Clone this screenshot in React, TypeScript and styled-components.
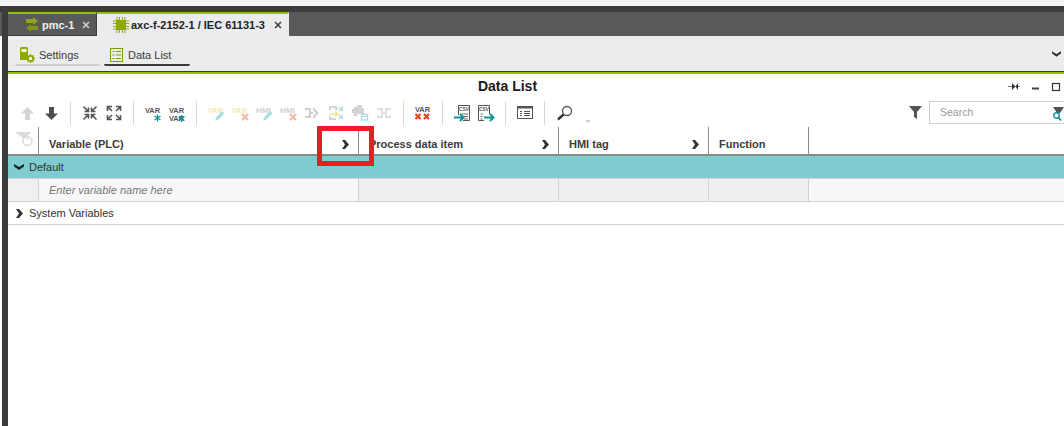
import React from "react";
import styled, { createGlobalStyle } from "styled-components";

const Global = createGlobalStyle`
  html, body { margin: 0; padding: 0; background: #fff; overflow: hidden; }
  * { box-sizing: border-box; }
  #root { font-family: "Liberation Sans", Arial, sans-serif; }
`;

const Page = styled.div`
  position: relative;
  width: 1064px;
  height: 426px;
  overflow: hidden;
  background: #fff;
  display: flex;
  flex-direction: column;
`;

const TopGap = styled.div`
  height: 6px;
  flex: none;
  background: #f5f5f5;
`;

const DarkStrip = styled.div`
  height: 6px;
  flex: none;
  background: #3c3c3c;
`;

const Frame = styled.div`
  flex: 1;
  display: flex;
  min-height: 0;
`;

const Gutter = styled.div`
  width: 2px;
  height: 24px;
  flex: none;
  background: #58595b;
`;

const Rail = styled.div`
  width: 6px;
  flex: none;
  background: #3c3c3c;
`;

const Main = styled.div`
  flex: 1;
  min-width: 0;
  display: flex;
  flex-direction: column;
  background: #fff;
`;

const TabBar = styled.div`
  height: 24px;
  flex: none;
  background: #58595b;
  display: flex;
`;

const Tab = styled.div<{ $active?: boolean; $width: number }>`
  width: ${(p) => p.$width}px;
  height: 24px;
  display: flex;
  align-items: center;
  border-top: 2px solid #8fc400;
  border-right: 1px solid ${(p) => (p.$active ? "#ebeded" : "#3c3c3c")};
  border-bottom: 1px solid ${(p) => (p.$active ? "#ebeded" : "#3c3c3c")};
  background: ${(p) => (p.$active ? "#ebeded" : "#58595b")};
  color: ${(p) => (p.$active ? "#222" : "#f0f0f0")};
  font-size: 11px;
  font-weight: bold;
  white-space: nowrap;
`;

const TabIcon = styled.svg<{ $left: number }>`
  margin-left: ${(p) => p.$left}px;
  flex: none;
`;

const TabLabel = styled.span<{ $gap: number }>`
  margin-left: ${(p) => p.$gap}px;
`;

const TabClose = styled.svg<{ $gap: number }>`
  margin-left: ${(p) => p.$gap}px;
  flex: none;
`;

const SubBar = styled.div`
  height: 36px;
  flex: none;
  background: #ebeded;
  border-bottom: 1px solid #3c3c3c;
  display: flex;
  align-items: flex-start;
  padding: 7px 0 0 7px;
  gap: 4px;
  position: relative;
`;

const SubTab = styled.div<{ $active?: boolean; $width: number; $inset: number; $gap: number }>`
  width: ${(p) => p.$width}px;
  height: 23px;
  display: flex;
  align-items: center;
  gap: ${(p) => p.$gap}px;
  padding: 3px 0 0 ${(p) => p.$inset}px;
  font-size: 11px;
  color: #3c3c3c;
  border-bottom: 2px solid ${(p) => (p.$active ? "#3c3c3c" : "#cfcfcf")};
  border-radius: 0 0 2px 2px;
`;

const ChevronDown = styled.svg`
  position: absolute;
  right: 3px;
  top: 15px;
`;

const GreenLine = styled.div`
  height: 2px;
  flex: none;
  background: #8fc400;
`;

const TitleBar = styled.div`
  height: 25px;
  flex: none;
  display: flex;
  align-items: center;
  justify-content: center;
  position: relative;
  padding: 0 57px 2px 0;
  font-size: 14px;
  font-weight: bold;
  color: #1a1a1a;
`;

const WindowControls = styled.svg`
  position: absolute;
  right: 0;
  top: 7px;
`;

const Toolbar = styled.div`
  height: 28px;
  flex: none;
  display: flex;
  align-items: center;
  padding-left: 7px;
  position: relative;
`;

const Tool = styled.svg`
  flex: none;
  display: block;
  width: 24px;
  height: 24px;
`;

const Sep = styled.div`
  width: 1px;
  height: 24px;
  background: #d8d8d8;
  margin: 0 7px;
  flex: none;
`;

const Caret = styled.svg`
  flex: none;
  margin: 17px 0 0 9px;
`;

const IconText = styled.text`
  font-family: "Liberation Sans", Arial, sans-serif;
  font-size: 8px;
  font-weight: bold;
`;

const SmallText = styled.text`
  font-family: "Liberation Sans", Arial, sans-serif;
  font-size: 6px;
  font-weight: bold;
`;

const FilterBox = styled.div`
  position: absolute;
  right: 0;
  top: 2px;
  display: flex;
  align-items: center;
  gap: 7px;
`;

const SearchBox = styled.div`
  width: 135px;
  height: 23px;
  border: 1px solid #cfcfcf;
  border-right: none;
  display: flex;
  align-items: center;
  padding: 0 0 2px 10px;
  font-size: 10.5px;
  color: #9a9a9a;
  position: relative;
`;

const SearchGlyph = styled.svg`
  position: absolute;
  right: 0;
  top: 4px;
`;

const HeaderRow = styled.div`
  height: 29px;
  flex: none;
  display: flex;
  border-bottom: 2px solid #8a8a8a;
`;

const Col = styled.div<{ $w: number }>`
  width: ${(p) => p.$w}px;
  flex: none;
  height: 27px;
  border-right: 1px solid #8a8a8a;
  display: flex;
  align-items: center;
  justify-content: space-between;
  padding: 7px 9px 0 10px;
  font-size: 11px;
  font-weight: bold;
  color: #3c3c3c;
  position: relative;
  white-space: nowrap;
`;

const FilterToggle = styled.svg`
  position: absolute;
  left: 7px;
  top: 5px;
`;

const GroupRow = styled.div`
  height: 23px;
  flex: none;
  background: #7fcdd1;
  border-bottom: 1px solid #d2d2d2;
  display: flex;
  align-items: center;
  padding-left: 6px;
  gap: 5px;
  font-size: 11px;
  color: #333;
`;

const EntryRow = styled.div`
  height: 23px;
  flex: none;
  display: flex;
  background: #f8f8f8;
  border-bottom: 1px solid #d2d2d2;
`;

const EntryCell = styled.div<{ $w: number; $tone: string }>`
  width: ${(p) => p.$w}px;
  flex: none;
  background: ${(p) => p.$tone};
  border-right: 1px solid #d2d2d2;
  display: flex;
  align-items: center;
  padding-left: 10px;
  font-size: 11px;
  font-style: italic;
  color: #777;
`;

const SystemRow = styled.div`
  height: 23px;
  flex: none;
  display: flex;
  align-items: center;
  padding-left: 6px;
  gap: 5px;
  font-size: 11px;
  color: #333;
  border-bottom: 1px solid #d2d2d2;
`;

const ChevSlot = styled.span`
  width: 10px;
  flex: none;
  display: flex;
  justify-content: center;
`;

const Highlight = styled.div`
  position: absolute;
  left: 317px;
  top: 126px;
  width: 57px;
  height: 40px;
  border: 5px solid #ed1c24;
`;

const ChevRight = () => (
  <svg width="7" height="9" viewBox="0 0 7 9">
    <path d="M0 0h3l4 4.5L3 9H0l3-4.5z" fill="#333" />
  </svg>
);

const ChevDown = () => (
  <svg width="10" height="6" viewBox="0 0 10 6">
    <path d="M0 0l5 3 5-3v2.5L5 6 0 2.5z" fill="#222" />
  </svg>
);

const Pen = ({ color }: { color: string }) => (
  <path d="M11 20l1-3.5 6-6.5 2.5 2.5-6 6z" fill={color} />
);

const Cross = ({ color }: { color: string }) => (
  <path d="M14 13l6 6M20 13l-6 6" stroke={color} strokeWidth="2.2" />
);

const Star = ({ x, y }: { x: number; y: number }) => (
  <path
    d={`M${x} ${y - 3.5}v7M${x - 3} ${y - 2}l6 4M${x + 3} ${y - 2}l-6 4`}
    stroke="#0f939b"
    strokeWidth="1.3"
  />
);

const Label = ({ y = 12, color, children }: { y?: number; color: string; children: string }) => (
  <IconText x="4" y={y} fill={color} textLength={15} lengthAdjust="spacingAndGlyphs">
    {children}
  </IconText>
);

const ChipPins =
  "M4 0v3M6.500 0v3M9.500 0v3M12 0v3M4 13v3M6.500 13v3M9.500 13v3M12 13v3M0 4h3M0 6.500h3M0 9.500h3M0 12h3M13 4h3M13 6.500h3M13 9.500h3M13 12h3";

export default function App() {
  return (
    <Page>
      <Global />
      <TopGap />
      <DarkStrip />
      <Frame>
        <Gutter />
        <Rail />
        <Main>
          <TabBar>
            <Tab $width={89}>
              <TabIcon $left={18} width="12" height="15" viewBox="0 0 12 15">
                <path d="M0 2h7V0l5 4-5 4V6H0z" fill="#8fa31a" />
                <path d="M12 9H5V7l-5 4 5 4v-2h7z" fill="#7f9318" />
              </TabIcon>
              <TabLabel $gap={4}>pmc-1</TabLabel>
              <TabClose $gap={8} width="8" height="8" viewBox="0 0 8 8">
                <path d="M1 1l6 6M7 1L1 7" stroke="#cfcfcf" strokeWidth="1.6" />
              </TabClose>
            </Tab>
            <Tab $active $width={192}>
              <TabIcon $left={16} width="16" height="16" viewBox="0 0 16 16">
                <rect x="3" y="3" width="10" height="10" fill="#8fa800" />
                <path d={ChipPins} stroke="#8fa800" />
              </TabIcon>
              <TabLabel $gap={2}>axc-f-2152-1 / IEC 61131-3</TabLabel>
              <TabClose $gap={9} width="8" height="8" viewBox="0 0 8 8">
                <path d="M1 1l6 6M7 1L1 7" stroke="#444" strokeWidth="1.6" />
              </TabClose>
            </Tab>
          </TabBar>
          <SubBar>
            <SubTab $width={85} $inset={5} $gap={4}>
              <svg width="15" height="16" viewBox="0 0 15 16">
                <path d="M1.5 0h5A1.5 1.5 0 0 1 8 1.5V13H0V1.500A1.500 1.500 0 0 1 1.500 0z" fill="#8fa800" />
                <rect x="1.5" y="2" width="5" height="3" fill="#fff" />
                <circle cx="10.5" cy="11.5" r="2.7" fill="#ebeded" stroke="#8fa800" strokeWidth="1.8" />
                <path d="M10.5 7v2M10.5 14v2M6 11.5h2M13 11.5h2M7.5 8.5l1.2 1.2M12.3 13.3l1.2 1.2M13.5 8.5l-1.2 1.2M8.7 13.3l-1.2 1.2" stroke="#8fa800" strokeWidth="1.3" />
              </svg>
              Settings
            </SubTab>
            <SubTab $active $width={86} $inset={6} $gap={5}>
              <svg width="13" height="14" viewBox="0 0 13 14">
                <rect x="0.5" y="0.5" width="12" height="13" fill="none" stroke="#7c9a14" />
                <path d="M2.5 3.5h2M6 3.5h5M2.5 7h2M6 7h5M2.5 10.5h2M6 10.5h5" stroke="#7c9a14" />
              </svg>
              Data List
            </SubTab>
            <ChevronDown width="9" height="6" viewBox="0 0 10 6">
              <path d="M0 0l5 3 5-3v2.5L5 6 0 2.5z" fill="#333" />
            </ChevronDown>
          </SubBar>
          <GreenLine />
          <TitleBar>
            Data List
            <WindowControls width="60" height="12" viewBox="0 0 60 12">
              <path d="M4 5.5h4M13 5.5h3" stroke="#777" />
              <path d="M8 2l3.500 3.500L8 9zM14 2l-2.500 3.500L14 9z" fill="#333" />
              <rect x="28" y="6.5" width="7" height="2" fill="#444" />
              <rect x="48.5" y="2.5" width="7" height="7" fill="none" stroke="#333" strokeWidth="1.2" />
            </WindowControls>
          </TitleBar>
          <Toolbar>
            <Tool viewBox="0 0 24 24">
              <path d="M12.5 6l6.500 6.500h-4V19h-5v-6.500H6z" fill="#d4d4d4" />
            </Tool>
            <Tool viewBox="0 0 24 24">
              <path d="M12.5 19L6 12.500h4V6h5v6.500h4z" fill="#4f4f4f" />
            </Tool>
            <Sep />
            <Tool viewBox="0 0 24 24">
              <path d="M5.5 5.5l5 5M10.5 6.5v4h-4M18.5 5.5l-5 5M13.5 6.5v4h4M5.5 18.5l5-5M10.5 17.5v-4h-4M18.5 18.5l-5-5M13.5 17.5v-4h4" stroke="#555" strokeWidth="1.6" fill="none" />
            </Tool>
            <Tool viewBox="0 0 24 24">
              <path d="M10 10L6 6M5.5 10V5.5H10M14 10l4-4M14 5.5h4.500V10M10 14l-4 4M5.5 14v4.500H10M14 14l4 4M18.5 14v4.500H14" stroke="#555" strokeWidth="1.6" fill="none" />
            </Tool>
            <Sep />
            <Tool viewBox="0 0 24 24">
              <Label color="#555">VAR</Label>
              <Star x={16.5} y={17} />
            </Tool>
            <Tool viewBox="0 0 24 24">
              <Label color="#555">VAR</Label>
              <Label y={20} color="#555">VAR</Label>
              <Star x={16.5} y={17.5} />
            </Tool>
            <Sep />
            <Tool viewBox="0 0 24 24">
              <Label color="#f5eab0">VAR</Label>
              <Pen color="#a9dfe2" />
            </Tool>
            <Tool viewBox="0 0 24 24">
              <Label color="#f5eab0">VAR</Label>
              <Cross color="#f8b9a8" />
            </Tool>
            <Tool viewBox="0 0 24 24">
              <Label color="#cfcfcf">HMI</Label>
              <Pen color="#a9dfe2" />
            </Tool>
            <Tool viewBox="0 0 24 24">
              <Label color="#cfcfcf">HMI</Label>
              <Cross color="#f8b9a8" />
            </Tool>
            <Tool viewBox="0 0 24 24">
              <path d="M5 7h6v10H5v-2h4V9H5zM9 11h4v2H9z" fill="#cfcfcf" />
              <path d="M13 6l6 6-6 6v-3l3-3-3-3z" fill="#cfcfcf" />
            </Tool>
            <Tool viewBox="0 0 24 24">
              <path d="M6 9V6h6v2h2M6 15v3h6" fill="none" stroke="#d4d4d4" strokeWidth="2" />
              <path d="M6 13h7M11 10.5l3 2.500-3 2.500" fill="none" stroke="#f2e28f" strokeWidth="1.6" />
              <path d="M15 6l4 4M19 6l-4 4M15 14l4 4M19 14l-4 4" stroke="#a9dfe2" strokeWidth="1.5" />
            </Tool>
            <Tool viewBox="0 0 24 24">
              <path d="M9 4h5v3h2v6H9v2H6v-3H4V8h2V6h3z" fill="#d4d4d4" />
              <rect x="13.5" y="13.5" width="6" height="5.5" fill="#fff" stroke="#a9dfe2" strokeWidth="1.3" />
              <path d="M14 15.5h5" stroke="#a9dfe2" />
            </Tool>
            <Tool viewBox="0 0 24 24">
              <path d="M5 8h5v2h1M5 16h5v-2h1M19 8h-5v2h-1M19 16h-5v-2h-1" fill="none" stroke="#d4d4d4" strokeWidth="1.4" />
              <path d="M9 12h6" stroke="#d4d4d4" strokeWidth="1.4" />
            </Tool>
            <Sep />
            <Tool viewBox="0 0 24 24">
              <Label y={11} color="#555">VAR</Label>
              <path d="M4.5 13l5 5M9.5 13l-5 5M13 13l5 5M18 13l-5 5" stroke="#e8431a" strokeWidth="2.2" />
            </Tool>
            <Sep />
            <Tool viewBox="0 0 24 24">
              <path d="M8.5 14V4.500h11v15H13" fill="none" stroke="#555" />
              <SmallText x="9" y="10" fill="#555" textLength={10} lengthAdjust="spacingAndGlyphs">CSV</SmallText>
              <path d="M12 13h6M14 15.5h4M14 18h4" stroke="#666" />
              <path d="M4 16.5h9M10 13l3.500 3.500L10 20" fill="none" stroke="#0f939b" strokeWidth="2" />
            </Tool>
            <Tool viewBox="0 0 24 24">
              <path d="M4.5 19.5v-15h11V13" fill="none" stroke="#555" />
              <path d="M4.5 19.5H10" stroke="#555" />
              <SmallText x="5" y="10" fill="#555" textLength={10} lengthAdjust="spacingAndGlyphs">CSV</SmallText>
              <path d="M6.5 13h2M6.5 15.5h2M6.5 18h2" stroke="#666" />
              <path d="M10 16.5h9M16 13l3.500 3.500L16 20" fill="none" stroke="#0f939b" strokeWidth="2" />
            </Tool>
            <Sep />
            <Tool viewBox="0 0 24 24">
              <rect x="4.5" y="5.5" width="15" height="12" fill="none" stroke="#555" />
              <path d="M4 6.5h16" stroke="#555" strokeWidth="2" />
              <path d="M7 10.5h2M11 10.5h6M7 12.5h2M11 12.5h6M7 14.5h2M11 14.5h6" stroke="#555" />
            </Tool>
            <Sep />
            <Tool viewBox="0 0 24 24">
              <circle cx="15" cy="10" r="4.5" fill="none" stroke="#555" strokeWidth="1.3" />
              <path d="M11.5 13.5L6 18.5" stroke="#333" strokeWidth="2.4" />
            </Tool>
            <Caret width="6" height="3" viewBox="0 0 6 3">
              <path d="M0 0h6L3 3z" fill="#cfcfcf" />
            </Caret>
            <FilterBox>
              <svg width="13" height="13" viewBox="0 0 13 13">
                <path d="M0 0h13L8 6v7l-3-2V6z" fill="#555" />
              </svg>
              <SearchBox>
                Search
                <SearchGlyph width="11" height="16" viewBox="0 0 11 16">
                  <path d="M0 1h11L7 7H4z" fill="#555" />
                  <circle cx="3.5" cy="9.5" r="2.8" fill="#fff" stroke="#0f939b" strokeWidth="1.4" />
                  <path d="M5.5 11.5l2.500 3" stroke="#0f939b" strokeWidth="1.8" />
                </SearchGlyph>
              </SearchBox>
            </FilterBox>
          </Toolbar>
          <HeaderRow>
            <Col $w={31}>
              <FilterToggle width="18" height="15" viewBox="0 0 18 15">
                <path d="M0 0h16l-5 6v6H8V6z" fill="#dcdcdc" />
                <circle cx="12.5" cy="9" r="4.5" fill="#fff" stroke="#dcdcdc" strokeWidth="1.5" />
                <path d="M12.5 4v4" stroke="#dcdcdc" strokeWidth="1.5" />
              </FilterToggle>
            </Col>
            <Col $w={320}>
              Variable (PLC)
              <ChevRight />
            </Col>
            <Col $w={200}>
              Process data item
              <ChevRight />
            </Col>
            <Col $w={150}>
              HMI tag
              <ChevRight />
            </Col>
            <Col $w={100}>Function</Col>
          </HeaderRow>
          <GroupRow>
            <ChevSlot>
              <ChevDown />
            </ChevSlot>
            Default
          </GroupRow>
          <EntryRow>
            <EntryCell $w={31} $tone="#f0f0f0" />
            <EntryCell $w={320} $tone="#f7f7f7">Enter variable name here</EntryCell>
            <EntryCell $w={200} $tone="#efefef" />
            <EntryCell $w={150} $tone="#efefef" />
            <EntryCell $w={100} $tone="#efefef" />
          </EntryRow>
          <SystemRow>
            <ChevSlot>
              <ChevRight />
            </ChevSlot>
            System Variables
          </SystemRow>
        </Main>
      </Frame>
      <Highlight />
    </Page>
  );
}
